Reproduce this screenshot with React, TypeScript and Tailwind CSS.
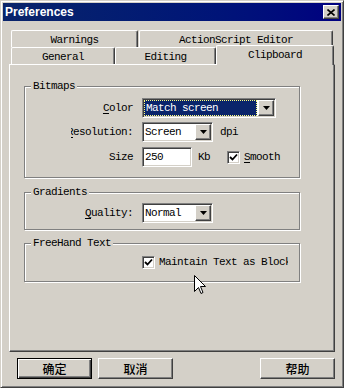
import React from "react";

const raised =
  "border border-t-white border-l-white border-r-[#404040] border-b-[#404040] shadow-[inset_-1px_-1px_#808080]";
const sunken =
  "border border-t-[#808080] border-l-[#808080] border-r-white border-b-white shadow-[inset_1px_1px_#404040,inset_-1px_-1px_#d4d0c8]";
const mono = "font-['Liberation_Mono',monospace] text-[11px] tracking-[-0.6px] text-black";
const etched = "relative border border-[#808080] shadow-[inset_1px_1px_#fff,1px_1px_#fff]";
const tab =
  "rounded-t-[2px] border-l border-t border-white border-r border-r-[#404040] shadow-[inset_-1px_0_#808080] pt-[3px] text-center leading-[13px]";

function Arrow() {
  return (
    <div className={`${raised} flex h-[16px] w-[16px] shrink-0 items-center justify-center bg-[#d4d0c8]`}>
      <svg width="7" height="4" viewBox="0 0 7 4">
        <path d="M0 0h7L3.5 4z" fill="#000" />
      </svg>
    </div>
  );
}

function Check() {
  return (
    <div className={`${sunken} flex h-[13px] w-[13px] shrink-0 items-center justify-center bg-white`}>
      <svg width="9" height="9" viewBox="0 0 9 9">
        <path d="M1 4l2.5 2.5L8 1.5" stroke="#000" strokeWidth="1.8" fill="none" />
      </svg>
    </div>
  );
}

function Group({ title, className, children }: { title: string; className: string; children: React.ReactNode }) {
  return (
    <div className={`${etched} ${className}`}>
      <span className={`${mono} absolute -top-[8px] left-[6px] bg-[#d4d0c8] px-[2px] leading-[14px]`}>{title}</span>
      {children}
    </div>
  );
}

function Label({ children }: { children: React.ReactNode }) {
  return (
    <div className={`${mono} flex w-[109px] shrink-0 justify-end overflow-hidden whitespace-nowrap pr-[1px]`}>
      <span className="shrink-0">{children}</span>
    </div>
  );
}

export default function App() {
  return (
    <div className="relative h-[388px] w-[344px] overflow-hidden border border-t-[#d4d0c8] border-l-[#d4d0c8] border-r-[#404040] border-b-[#404040] bg-[#d4d0c8] p-[2px] shadow-[inset_1px_1px_#fff,inset_-1px_-1px_#808080]">
      {/* title bar */}
      <div className="flex h-[18px] items-center justify-between bg-gradient-to-r from-[#0a246a] to-[#000080] pl-[2px] pr-[2px]">
        <span className="font-['Liberation_Sans',Arial,sans-serif] text-[12px] font-bold text-white">Preferences</span>
        <div className={`${raised} flex h-[14px] w-[16px] items-center justify-center bg-[#d4d0c8]`}>
          <svg width="8" height="7" viewBox="0 0 8 7">
            <path d="M0.5 0.5L7.5 6.5M7.5 0.5L0.5 6.5" stroke="#000" strokeWidth="1.6" />
          </svg>
        </div>
      </div>

      <div className="px-[6px] pt-[9px]">
        {/* back tab row */}
        <div className="flex h-[17px] pl-[2px]">
          <div className={`${mono} ${tab} w-[127px]`}>Warnings</div>
          <div className={`${mono} ${tab} ml-[1px] w-[194px]`}>ActionScript Editor</div>
        </div>
        {/* front tab row */}
        <div className="flex h-[17px] items-end pl-[2px]">
          <div className={`${mono} ${tab} h-[17px] w-[104px]`}>General</div>
          <div className={`${mono} ${tab} h-[17px] w-[101px]`}>Editing</div>
          <div className={`${mono} ${tab} relative z-10 -mb-[1px] h-[20px] w-[118px] bg-[#d4d0c8]`}>Clipboard</div>
        </div>

        {/* panel */}
        <div className="flex h-[288px] w-[326px] flex-col border border-t-white border-l-white border-r-[#404040] border-b-[#404040] pl-[14px] pt-[21px] shadow-[inset_-1px_-1px_#808080]">
          <Group title="Bitmaps" className="h-[92px] w-[276px] pt-[11px]">
            <div className="flex h-[20px] items-center">
              <Label>
                <span className="underline underline-offset-2">C</span>olor
              </Label>
              <div className={`${sunken} ml-[8px] flex h-[20px] w-[134px] items-center bg-white p-[1px]`}>
                <div className="mr-[1px] flex h-[16px] flex-1 items-center border border-dotted border-[#ffff80] bg-[#0a246a]">
                  <span className={`${mono} pl-[1px] text-white`}>Match screen</span>
                </div>
                <Arrow />
              </div>
            </div>
            <div className="mt-[4px] flex h-[20px] items-center">
              <div className="flex w-[109px] shrink-0 justify-end">
                <div className={`${mono} flex w-[63px] justify-end overflow-hidden whitespace-nowrap pr-[1px]`}>
                  <span className="shrink-0">
                    <span className="underline underline-offset-2">R</span>esolution:
                  </span>
                </div>
              </div>
              <div className={`${sunken} ml-[8px] flex h-[20px] w-[71px] items-center bg-white p-[1px]`}>
                <span className={`${mono} flex-1 pl-[1px]`}>Screen</span>
                <Arrow />
              </div>
              <span className={`${mono} ml-[7px]`}>dpi</span>
            </div>
            <div className="mt-[5px] flex h-[20px] items-center">
              <Label>Size</Label>
              <div className={`${sunken} ml-[8px] flex h-[20px] w-[50px] items-center bg-white pl-[2px]`}>
                <span className={mono}>250</span>
              </div>
              <span className={`${mono} ml-[6px]`}>Kb</span>
              <div className="ml-[17px]">
                <Check />
              </div>
              <span className={`${mono} ml-[4px]`}>
                <span className="underline underline-offset-2">S</span>mooth
              </span>
            </div>
          </Group>

          <Group title="Gradients" className="mt-[14px] h-[38px] w-[276px] pt-[10px]">
            <div className="flex h-[20px] items-center">
              <Label>
                <span className="underline underline-offset-2">Q</span>uality:
              </Label>
              <div className={`${sunken} ml-[8px] flex h-[20px] w-[71px] items-center bg-white p-[1px]`}>
                <span className={`${mono} flex-1 pl-[1px]`}>Normal</span>
                <Arrow />
              </div>
            </div>
          </Group>

          <Group title="FreeHand Text" className="mt-[13px] h-[39px] w-[276px] pt-[12px]">
            <div className="flex h-[13px] items-center pl-[117px]">
              <Check />
              <div className={`${mono} ml-[4px] w-[129px] overflow-hidden whitespace-nowrap`}>Maintain Text as Block</div>
            </div>
          </Group>
        </div>

        {/* buttons */}
        <div className="mt-[6px] flex h-[21px] pl-[8px] font-['Noto_Sans_CJK_SC',sans-serif] text-[12px] font-medium text-black">
          <div className="flex h-[21px] w-[75px] items-center justify-center border border-black bg-[#d4d0c8] shadow-[inset_1px_1px_#fff,inset_-1px_-1px_#404040,inset_-2px_-2px_#808080]">确定</div>
          <div className={`${raised} ml-[6px] flex h-[21px] w-[75px] items-center justify-center`}>取消</div>
          <div className={`${raised} ml-auto flex h-[21px] w-[75px] items-center justify-center`}>帮助</div>
        </div>
      </div>

      {/* mouse cursor */}
      <svg className="absolute left-[193px] top-[274px]" width="12" height="20" viewBox="0 0 12 20">
        <path
          d="M0.5 0.5V16.5L4.5 12.5L7 18.5L9 17.5L6.5 11.5H11.5Z"
          fill="#fff"
          stroke="#000"
          strokeWidth="1"
        />
      </svg>
    </div>
  );
}
